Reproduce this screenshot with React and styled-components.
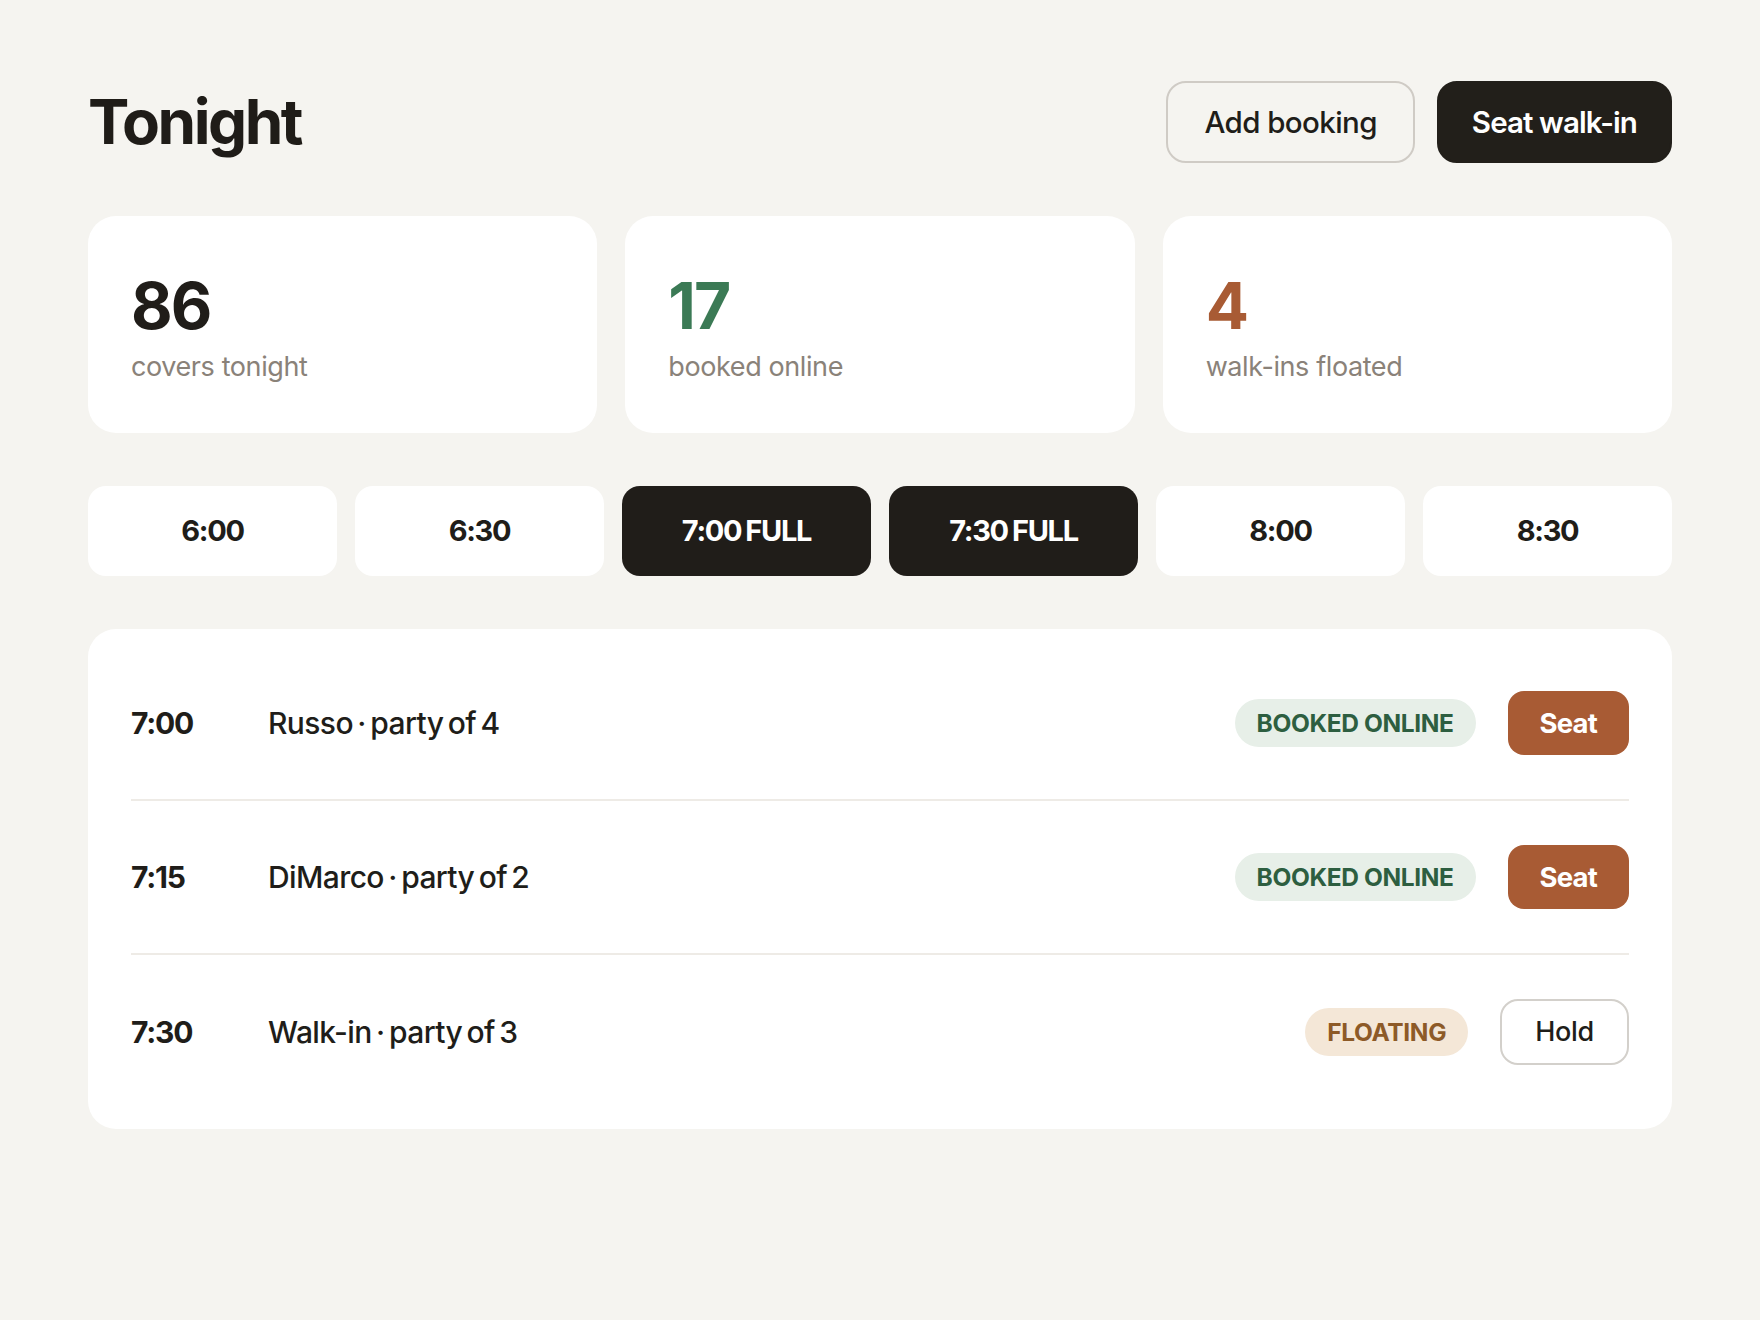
import styled, { createGlobalStyle } from 'styled-components';

const GlobalStyle = createGlobalStyle`
  * { box-sizing: border-box; }
  body {
    margin: 0;
    background: #f5f4f0;
    font-family: Inter, "Noto Sans", "Liberation Sans", sans-serif;
    color: #201d19;
  }
`;

const stats = [
  { value: '86', label: 'covers tonight', tone: 'dark' },
  { value: '17', label: 'booked online', tone: 'green' },
  { value: '4', label: 'walk-ins floated', tone: 'rust' },
];

const slots = [
  { label: '6:00' },
  { label: '6:30' },
  { label: '7:00 FULL', full: true },
  { label: '7:30 FULL', full: true },
  { label: '8:00' },
  { label: '8:30' },
];

const bookings = [
  { time: '7:00', name: 'Russo', party: 4, status: 'BOOKED ONLINE', tone: 'green', action: 'Seat' },
  { time: '7:15', name: 'DiMarco', party: 2, status: 'BOOKED ONLINE', tone: 'green', action: 'Seat' },
  { time: '7:30', name: 'Walk-in', party: 3, status: 'FLOATING', tone: 'sand', action: 'Hold' },
];

const toneColors = {
  dark: '#201d19',
  green: '#3b7a55',
  rust: '#a85b34',
};

const badgeTones = {
  green: { bg: '#e7efe8', fg: '#2d5e40' },
  sand: { bg: '#f4e7d7', fg: '#8d5a27' },
};

function App() {
  return (
    <Page>
      <GlobalStyle />
      <Header>
        <Title>Tonight</Title>
        <Actions>
          <HeaderButton>Add booking</HeaderButton>
          <HeaderButton $solid>Seat walk-in</HeaderButton>
        </Actions>
      </Header>

      <StatGrid>
        {stats.map((s) => (
          <StatCard key={s.label}>
            <StatValue $tone={s.tone}>{s.value}</StatValue>
            <StatLabel>{s.label}</StatLabel>
          </StatCard>
        ))}
      </StatGrid>

      <SlotRow>
        {slots.map((s) => (
          <Slot key={s.label} $full={s.full}>
            {s.label}
          </Slot>
        ))}
      </SlotRow>

      <ListCard>
        {bookings.map((b) => (
          <Row key={b.time}>
            <Time>{b.time}</Time>
            <Name>
              {b.name} · party of {b.party}
            </Name>
            <Badge $tone={b.tone}>{b.status}</Badge>
            {b.action === 'Seat' ? (
              <SeatButton>Seat</SeatButton>
            ) : (
              <HoldButton>Hold</HoldButton>
            )}
          </Row>
        ))}
      </ListCard>
    </Page>
  );
}

export default App;

const Page = styled.div`
  padding: 81px 88px 80px;
  display: flex;
  flex-direction: column;
  gap: 53px;
`;

const Header = styled.div`
  display: flex;
  align-items: center;
  justify-content: space-between;
`;

const Title = styled.h1`
  margin: 0;
  font-size: 62px;
  font-weight: 700;
  letter-spacing: -0.04em;
  line-height: 1;
  color: #1f1c18;
`;

const Actions = styled.div`
  display: flex;
  gap: 22px;
`;

const HeaderButton = styled.button`
  font-family: inherit;
  font-size: 29.5px;
  line-height: 34px;
  font-weight: ${(p) => (p.$solid ? 600 : 500)};
  letter-spacing: ${(p) => (p.$solid ? '-0.03em' : '-0.02em')};
  padding: 22px ${(p) => (p.$solid ? '33px' : '36px')};
  border-radius: 20px;
  border: 2px solid ${(p) => (p.$solid ? '#221f1a' : '#cfcbc5')};
  background: ${(p) => (p.$solid ? '#221f1a' : 'transparent')};
  color: ${(p) => (p.$solid ? '#ffffff' : '#201d19')};
  cursor: pointer;
`;

const StatGrid = styled.div`
  display: grid;
  grid-template-columns: repeat(3, 1fr);
  gap: 28px;
`;

const StatCard = styled.div`
  background: #ffffff;
  border-radius: 28px;
  padding: 52px 43px 47px;
  display: flex;
  flex-direction: column;
  gap: 3px;
`;

const StatValue = styled.div`
  font-size: 64px;
  line-height: 1.2;
  font-weight: 700;
  letter-spacing: -0.03em;
  color: ${(p) => toneColors[p.$tone]};
`;

const StatLabel = styled.div`
  font-size: 27px;
  line-height: 1.4;
  font-weight: 400;
  letter-spacing: -0.015em;
  color: #8a8279;
`;

const SlotRow = styled.div`
  display: grid;
  grid-template-columns: repeat(6, 1fr);
  gap: 18px;
`;

const Slot = styled.div`
  height: 90px;
  border-radius: 18px;
  display: flex;
  align-items: center;
  justify-content: center;
  font-size: 29px;
  font-weight: 700;
  letter-spacing: -0.045em;
  word-spacing: -0.05em;
  background: ${(p) => (p.$full ? '#201d19' : '#ffffff')};
  color: ${(p) => (p.$full ? '#ffffff' : '#201d19')};
`;

const ListCard = styled.div`
  background: #ffffff;
  border-radius: 28px;
  padding: 18px 43px 20px;
`;

const Row = styled.div`
  display: flex;
  align-items: center;
  padding: 44px 0;

  & + & {
    border-top: 2px solid #eeebe6;
  }
`;

const Time = styled.div`
  width: 137px;
  flex-shrink: 0;
  font-size: 30px;
  font-weight: 700;
  letter-spacing: -0.04em;
`;

const Name = styled.div`
  flex: 1;
  font-size: 30px;
  font-weight: 500;
  letter-spacing: -0.02em;
  word-spacing: -0.1em;
`;

const Badge = styled.span`
  display: inline-flex;
  align-items: center;
  height: 48px;
  padding: 0 22px;
  border-radius: 999px;
  font-size: 24.5px;
  font-weight: 700;
  letter-spacing: -0.015em;
  background: ${(p) => badgeTones[p.$tone].bg};
  color: ${(p) => badgeTones[p.$tone].fg};
`;

const SeatButton = styled.button`
  margin-left: 32px;
  font-family: inherit;
  font-size: 27.5px;
  line-height: 32px;
  font-weight: 700;
  letter-spacing: -0.03em;
  padding: 16px 32px;
  border: none;
  border-radius: 16px;
  background: #a85b34;
  color: #ffffff;
  cursor: pointer;
`;

const HoldButton = styled.button`
  margin-left: 32px;
  font-family: inherit;
  font-size: 27px;
  line-height: 32px;
  font-weight: 500;
  letter-spacing: -0.01em;
  padding: 15px 33px;
  border: 2px solid #d3d0cb;
  border-radius: 18px;
  background: #ffffff;
  color: #201d19;
  cursor: pointer;
`;
